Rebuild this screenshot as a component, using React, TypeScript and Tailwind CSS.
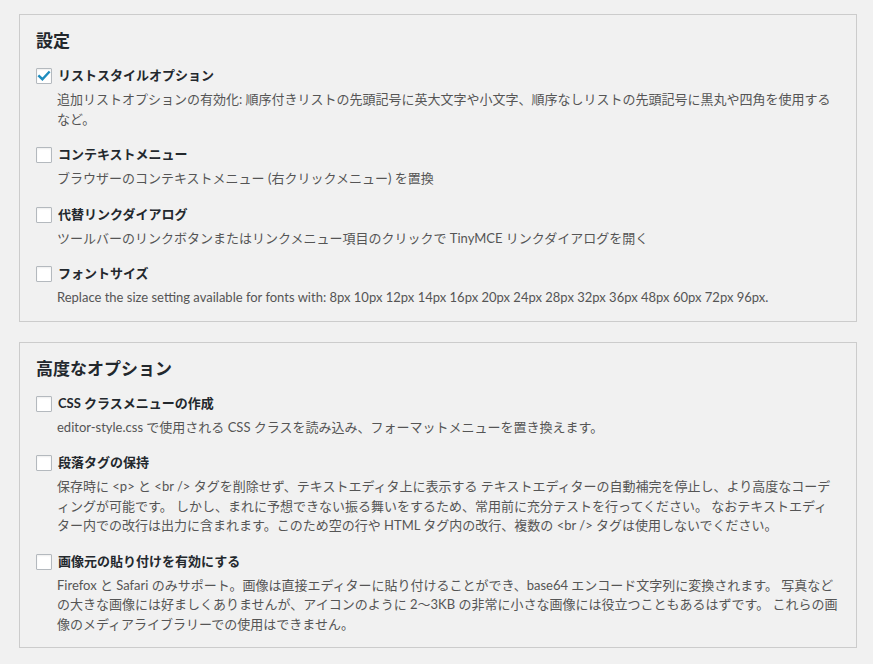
import React from 'react';

type Option = { label: string; desc: string; checked?: boolean };

const basic: Option[] = [
  {
    label: 'リストスタイルオプション',
    desc: '追加リストオプションの有効化: 順序付きリストの先頭記号に英大文字や小文字、順序なしリストの先頭記号に黒丸や四角を使用するなど。',
    checked: true,
  },
  { label: 'コンテキストメニュー', desc: 'ブラウザーのコンテキストメニュー (右クリックメニュー) を置換' },
  { label: '代替リンクダイアログ', desc: 'ツールバーのリンクボタンまたはリンクメニュー項目のクリックで TinyMCE リンクダイアログを開く' },
  {
    label: 'フォントサイズ',
    desc: 'Replace the size setting available for fonts with: 8px 10px 12px 14px 16px 20px 24px 28px 32px 36px 48px 60px 72px 96px.',
  },
];

const advanced: Option[] = [
  { label: 'CSS クラスメニューの作成', desc: 'editor-style.css で使用される CSS クラスを読み込み、フォーマットメニューを置き換えます。' },
  {
    label: '段落タグの保持',
    desc: '保存時に <p> と <br /> タグを削除せず、テキストエディタ上に表示する テキストエディターの自動補完を停止し、より高度なコーディングが可能です。 しかし、まれに予想できない振る舞いをするため、常用前に充分テストを行ってください。 なおテキストエディター内での改行は出力に含まれます。このため空の行や HTML タグ内の改行、複数の <br /> タグは使用しないでください。',
  },
  {
    label: '画像元の貼り付けを有効にする',
    desc: 'Firefox と Safari のみサポート。画像は直接エディターに貼り付けることができ、base64 エンコード文字列に変換されます。 写真などの大きな画像には好ましくありませんが、アイコンのように 2～3KB の非常に小さな画像には役立つこともあるはずです。 これらの画像のメディアライブラリーでの使用はできません。',
  },
];

const Checkbox: React.FC<{ checked?: boolean }> = ({ checked }) => (
  <span className="w-4 h-4 shrink-0 bg-white border border-[#b4b9be] rounded-[1px] shadow-[inset_0_1px_2px_rgba(0,0,0,0.07)] flex items-center justify-center">
    {checked && (
      <svg width="14" height="14" viewBox="0 0 14 14">
        <path d="M2.2 7.2 L5.4 10.2 L11.8 3.4" fill="none" stroke="#1e8cbe" strokeWidth="2.4" strokeLinecap="square" />
      </svg>
    )}
  </span>
);

const Item: React.FC<{ opt: Option }> = ({ opt }) => (
  <div className="flex flex-col">
    <div className="h-[22px] flex items-center">
      <Checkbox checked={opt.checked} />
      <span className="ml-[6px] text-[13px] font-bold text-[#23282d]">{opt.label}</span>
    </div>
    <p className="mt-[3px] pl-[21px] text-[13px] leading-[19.5px] text-[#555]">{opt.desc}</p>
  </div>
);

const Panel: React.FC<{ title: string; items: Option[] }> = ({ title, items }) => (
  <section className="w-[838px] border border-[#ccc] px-4 pt-[14px] pb-[13px]">
    <h2 className="text-[17px] leading-6 font-bold text-[#23282d]">{title}</h2>
    <div className="mt-3 flex flex-col gap-[15px]">
      {items.map((o) => (
        <Item key={o.label} opt={o} />
      ))}
    </div>
  </section>
);

export default function App() {
  return (
    <div
      className="min-h-screen bg-[#f1f1f1] pl-[19px] pt-[14px] pb-4 flex flex-col gap-5"
      style={{ fontFamily: 'Lato, "Noto Sans CJK JP", sans-serif' }}
    >
      <Panel title="設定" items={basic} />
      <Panel title="高度なオプション" items={advanced} />
    </div>
  );
}
